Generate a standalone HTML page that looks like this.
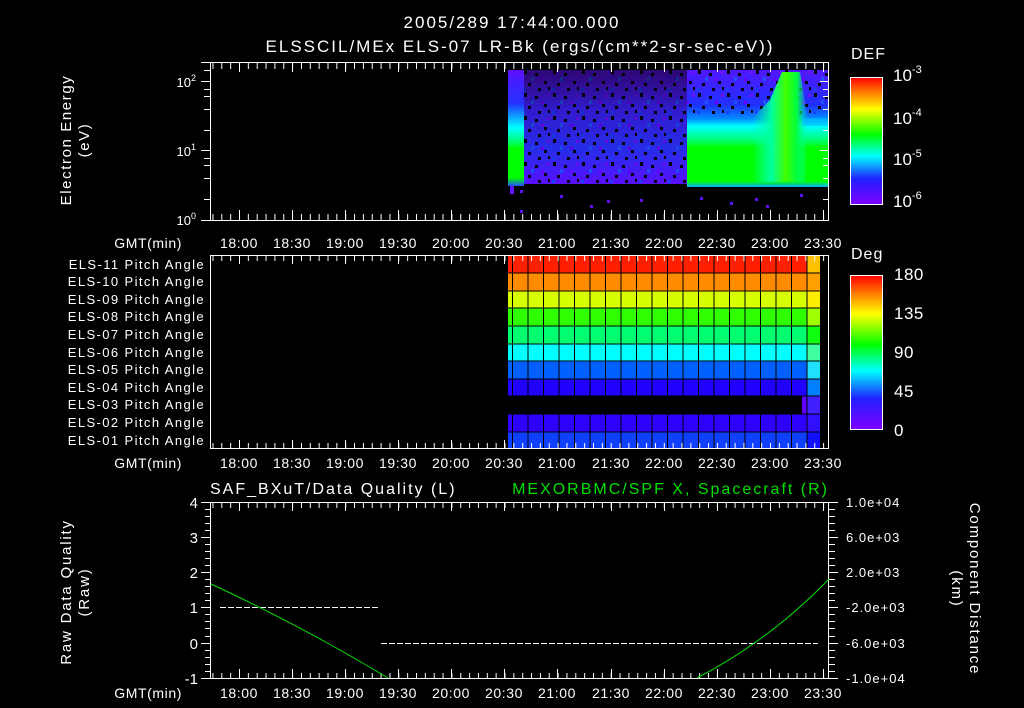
<!DOCTYPE html>
<html><head><meta charset="utf-8"><style>
html,body{margin:0;padding:0;background:#000;width:1024px;height:708px;overflow:hidden}
svg{display:block}
text{font-family:"Liberation Sans",sans-serif;fill:#fff}
</style></head><body>
<svg width="1024" height="708" viewBox="0 0 1024 708" xmlns="http://www.w3.org/2000/svg">
<defs>
<pattern id="tt" x="239" y="0" width="8.85" height="708" patternUnits="userSpaceOnUse"><rect x="0" y="0" width="1" height="708" fill="#fff"/></pattern>
<pattern id="speck" x="0" y="0" width="29" height="23" patternUnits="userSpaceOnUse">
<rect x="2" y="1" width="3" height="4" fill="#000"/><rect x="13" y="4" width="3" height="3" fill="#000"/><rect x="22" y="12" width="3" height="3" fill="#000"/><rect x="6" y="14" width="3" height="3" fill="#000"/><rect x="16" y="19" width="3" height="3" fill="#000"/><rect x="25" y="2" width="3" height="3" fill="#7010ff"/><rect x="9" y="8" width="3" height="4" fill="#2050ff"/><rect x="19" y="9" width="3" height="3" fill="#6a00ff"/><rect x="1" y="19" width="3" height="3" fill="#1840ff"/><rect x="26" y="18" width="2" height="3" fill="#000"/></pattern>
<linearGradient id="fadeTop" x1="0" y1="0" x2="0" y2="1"><stop offset="0" stop-color="#000" stop-opacity=".55"/><stop offset=".35" stop-color="#000" stop-opacity=".2"/><stop offset="1" stop-color="#000" stop-opacity="0"/></linearGradient>
<linearGradient id="cbDef" x1="0" y1="1" x2="0" y2="0"><stop offset="0" stop-color="#8000ff"/><stop offset=".2" stop-color="#2020ff"/><stop offset=".38" stop-color="#00ffff"/><stop offset=".55" stop-color="#00ff00"/><stop offset=".75" stop-color="#ffff00"/><stop offset=".88" stop-color="#ff8000"/><stop offset="1" stop-color="#ff0000"/></linearGradient>
<linearGradient id="gL" x1="0" y1="0" x2="0" y2="1"><stop offset="0" stop-color="#2030ff"/><stop offset=".3" stop-color="#00ffff"/><stop offset=".45" stop-color="#00ff80"/><stop offset=".55" stop-color="#00ff00"/><stop offset=".9" stop-color="#00ff00"/><stop offset="1" stop-color="#2050ff"/></linearGradient>
<linearGradient id="gP" x1="0" y1="0" x2="0" y2="1"><stop offset="0" stop-color="#6010ff"/><stop offset=".3" stop-color="#4020ff"/><stop offset=".7" stop-color="#2a30ff"/><stop offset="1" stop-color="#5a10ff"/></linearGradient>
<linearGradient id="gR" x1="0" y1="0" x2="0" y2="1"><stop offset="0" stop-color="#5018ff"/><stop offset=".3" stop-color="#2030ff"/><stop offset=".42" stop-color="#0090ff"/><stop offset=".48" stop-color="#00ffff"/><stop offset=".6" stop-color="#00ff70"/><stop offset=".66" stop-color="#00ff00"/><stop offset=".95" stop-color="#00ff00"/><stop offset="1" stop-color="#00b0ff"/></linearGradient>
<linearGradient id="gPk" x1="0" y1="0" x2="1" y2="0"><stop offset="0" stop-color="#00ffb0" stop-opacity="0"/><stop offset=".35" stop-color="#00ffa0"/><stop offset=".6" stop-color="#40ff00"/><stop offset=".8" stop-color="#00ff40"/><stop offset="1" stop-color="#00ffc0" stop-opacity="0"/></linearGradient>
</defs>

<!-- titles -->
<text x="512" y="28" font-size="17" text-anchor="middle" letter-spacing="2">2005/289 17:44:00.000</text>
<text x="520" y="52" font-size="17" text-anchor="middle" letter-spacing="2">ELSSCIL/MEx ELS-07 LR-Bk  (ergs/(cm**2-sr-sec-eV))</text>

<!-- ===== Panel 1 ===== -->
<rect x="508" y="70" width="16" height="45" fill="url(#gP)"/>
<rect x="508" y="103" width="16" height="83" fill="url(#gL)"/>
<rect x="524" y="70" width="163" height="114" fill="url(#gP)"/>
<rect x="524" y="70" width="163" height="114" fill="url(#speck)"/>
<rect x="524" y="70" width="163" height="114" fill="url(#fadeTop)"/>
<rect x="687" y="70" width="142" height="117" fill="url(#gR)"/>
<rect x="687" y="70" width="142" height="45" fill="url(#speck)"/>
<polygon points="752,118 770,100 782,72 800,72 808,120 806,182 752,182" fill="url(#gPk)"/>
<rect x="802" y="118" width="27" height="8" fill="#00c0ff" opacity=".6"/>
<rect x="510" y="186" width="4" height="8" fill="#6010ff"/><rect x="520" y="190" width="3" height="3" fill="#6010ff"/>
<rect x="560" y="195" width="3" height="3" fill="#6010ff"/><rect x="590" y="205" width="3" height="3" fill="#6010ff"/>
<rect x="640" y="199" width="3" height="3" fill="#6010ff"/><rect x="700" y="197" width="3" height="3" fill="#6010ff"/>
<rect x="730" y="202" width="3" height="3" fill="#6010ff"/><rect x="766" y="205" width="3" height="3" fill="#6010ff"/>
<rect x="800" y="194" width="3" height="3" fill="#6010ff"/><rect x="520" y="210" width="3" height="3" fill="#6010ff"/>
<rect x="607" y="200" width="3" height="3" fill="#6010ff"/><rect x="755" y="198" width="3" height="3" fill="#6010ff"/>
<!-- frame -->
<rect x="210.5" y="62.5" width="618" height="158" fill="none" stroke="#fff"/>
<line x1="201" y1="62.5" x2="210" y2="62.5" stroke="#fff"/>
<line x1="201" y1="220.5" x2="210" y2="220.5" stroke="#fff"/>
<rect x="211" y="63" width="617" height="6" fill="url(#tt)"/>
<rect x="211" y="214" width="617" height="6" fill="url(#tt)"/>
<g stroke="#fff">
<line x1="239.5" y1="63" x2="239.5" y2="72"/><line x1="292.5" y1="63" x2="292.5" y2="72"/><line x1="345.5" y1="63" x2="345.5" y2="72"/><line x1="398.5" y1="63" x2="398.5" y2="72"/><line x1="451.5" y1="63" x2="451.5" y2="72"/><line x1="504.5" y1="63" x2="504.5" y2="72"/><line x1="557.5" y1="63" x2="557.5" y2="72"/><line x1="611.5" y1="63" x2="611.5" y2="72"/><line x1="664.5" y1="63" x2="664.5" y2="72"/><line x1="717.5" y1="63" x2="717.5" y2="72"/><line x1="770.5" y1="63" x2="770.5" y2="72"/><line x1="823.5" y1="63" x2="823.5" y2="72"/>
<line x1="239.5" y1="210" x2="239.5" y2="220"/><line x1="292.5" y1="210" x2="292.5" y2="220"/><line x1="345.5" y1="210" x2="345.5" y2="220"/><line x1="398.5" y1="210" x2="398.5" y2="220"/><line x1="451.5" y1="210" x2="451.5" y2="220"/><line x1="504.5" y1="210" x2="504.5" y2="220"/><line x1="557.5" y1="210" x2="557.5" y2="220"/><line x1="611.5" y1="210" x2="611.5" y2="220"/><line x1="664.5" y1="210" x2="664.5" y2="220"/><line x1="717.5" y1="210" x2="717.5" y2="220"/><line x1="770.5" y1="210" x2="770.5" y2="220"/><line x1="823.5" y1="210" x2="823.5" y2="220"/>
<line x1="201" y1="81.5" x2="210" y2="81.5"/><line x1="201" y1="150.5" x2="210" y2="150.5"/>
<line x1="204" y1="199.5" x2="210" y2="199.5"/><line x1="204" y1="178.5" x2="210" y2="178.5"/><line x1="204" y1="165.5" x2="210" y2="165.5"/><line x1="204" y1="158.5" x2="210" y2="158.5"/>
<line x1="204" y1="130.5" x2="210" y2="130.5"/><line x1="204" y1="109.5" x2="210" y2="109.5"/><line x1="204" y1="96.5" x2="210" y2="96.5"/><line x1="204" y1="89.5" x2="210" y2="89.5"/>
<line x1="204" y1="70.5" x2="210" y2="70.5"/>
<line x1="820" y1="81.5" x2="829" y2="81.5"/><line x1="820" y1="150.5" x2="829" y2="150.5"/>
<line x1="823" y1="199.5" x2="829" y2="199.5"/><line x1="823" y1="178.5" x2="829" y2="178.5"/><line x1="823" y1="165.5" x2="829" y2="165.5"/><line x1="823" y1="158.5" x2="829" y2="158.5"/>
<line x1="823" y1="130.5" x2="829" y2="130.5"/><line x1="823" y1="109.5" x2="829" y2="109.5"/><line x1="823" y1="96.5" x2="829" y2="96.5"/><line x1="823" y1="89.5" x2="829" y2="89.5"/>
</g>
<text x="196" y="87" font-size="13" text-anchor="end">10<tspan font-size="9" dy="-6">2</tspan></text>
<text x="196" y="156" font-size="13" text-anchor="end">10<tspan font-size="9" dy="-6">1</tspan></text>
<text x="196" y="225" font-size="13" text-anchor="end">10<tspan font-size="9" dy="-6">0</tspan></text>
<text transform="translate(71,140) rotate(-90)" font-size="15" letter-spacing="1.6" text-anchor="middle">Electron Energy</text>
<text transform="translate(89,140) rotate(-90)" font-size="15" letter-spacing="1.6" text-anchor="middle">(eV)</text>

<g font-size="14" letter-spacing=".6" text-anchor="middle">
<text x="182" y="248" text-anchor="end">GMT(min)</text>
<text x="239" y="248">18:00</text><text x="292" y="248">18:30</text><text x="345" y="248">19:00</text><text x="398" y="248">19:30</text><text x="451" y="248">20:00</text><text x="504" y="248">20:30</text><text x="557" y="248">21:00</text><text x="611" y="248">21:30</text><text x="664" y="248">22:00</text><text x="717" y="248">22:30</text><text x="770" y="248">23:00</text><text x="823" y="248">23:30</text>
</g>

<!-- DEF colorbar -->
<text x="851" y="59" font-size="16" letter-spacing="1">DEF</text>
<rect x="850.5" y="77.5" width="32" height="127" fill="url(#cbDef)" stroke="#fff"/>
<g font-size="17"><text x="893" y="81">10<tspan font-size="11" dy="-8">-3</tspan></text>
<text x="893" y="124">10<tspan font-size="11" dy="-8">-4</tspan></text>
<text x="893" y="165">10<tspan font-size="11" dy="-8">-5</tspan></text>
<text x="893" y="207">10<tspan font-size="11" dy="-8">-6</tspan></text></g>

<!-- ===== Panel 2 ===== -->
<g>
<rect x="508" y="256" width="312" height="17" fill="#ff2000"/>
<rect x="508" y="273" width="312" height="18" fill="#ff8c00"/>
<rect x="508" y="291" width="312" height="17" fill="#d8ff00"/>
<rect x="508" y="308" width="312" height="18" fill="#30ff00"/>
<rect x="508" y="326" width="312" height="18" fill="#00ff70"/>
<rect x="508" y="344" width="312" height="17" fill="#00ffff"/>
<rect x="508" y="361" width="312" height="18" fill="#0060ff"/>
<rect x="508" y="379" width="312" height="17" fill="#2000ff"/>
<rect x="802" y="396" width="5" height="18" fill="#6000ff"/>
<rect x="807" y="396" width="13" height="18" fill="#4020ff"/>
<rect x="508" y="414" width="312" height="18" fill="#3000ff"/>
<rect x="508" y="432" width="312" height="17" fill="#1040ff"/>
<rect x="807" y="256" width="13" height="17" fill="#ffc000"/>
<rect x="807" y="273" width="13" height="18" fill="#ffa000"/>
<rect x="807" y="291" width="13" height="17" fill="#ffee00"/>
<rect x="807" y="308" width="13" height="18" fill="#a0ff00"/>
<rect x="807" y="326" width="13" height="18" fill="#10ff10"/>
<rect x="807" y="344" width="13" height="17" fill="#40ffa0"/>
<rect x="807" y="361" width="13" height="18" fill="#20e0ff"/>
<rect x="807" y="379" width="13" height="17" fill="#0080ff"/>
<rect x="807" y="414" width="13" height="18" fill="#3010ff"/>
<rect x="807" y="432" width="13" height="17" fill="#1010ff"/>
</g>
<g stroke="#000" stroke-width="1">
<line x1="508" y1="273" x2="820" y2="273"/><line x1="508" y1="291" x2="820" y2="291"/><line x1="508" y1="308" x2="820" y2="308"/><line x1="508" y1="326" x2="820" y2="326"/><line x1="508" y1="344" x2="820" y2="344"/><line x1="508" y1="361" x2="820" y2="361"/><line x1="508" y1="379" x2="820" y2="379"/><line x1="508" y1="396" x2="820" y2="396"/><line x1="508" y1="414" x2="820" y2="414"/><line x1="508" y1="432" x2="820" y2="432"/>
<line x1="512.5" y1="256" x2="512.5" y2="449"/><line x1="528" y1="256" x2="528" y2="449"/><line x1="543.5" y1="256" x2="543.5" y2="449"/><line x1="559" y1="256" x2="559" y2="449"/><line x1="574.5" y1="256" x2="574.5" y2="449"/><line x1="590" y1="256" x2="590" y2="449"/><line x1="605.5" y1="256" x2="605.5" y2="449"/><line x1="621" y1="256" x2="621" y2="449"/><line x1="636.5" y1="256" x2="636.5" y2="449"/><line x1="652" y1="256" x2="652" y2="449"/><line x1="667.5" y1="256" x2="667.5" y2="449"/><line x1="683" y1="256" x2="683" y2="449"/><line x1="698.5" y1="256" x2="698.5" y2="449"/><line x1="714" y1="256" x2="714" y2="449"/><line x1="729.5" y1="256" x2="729.5" y2="449"/><line x1="745" y1="256" x2="745" y2="449"/><line x1="760.5" y1="256" x2="760.5" y2="449"/><line x1="776" y1="256" x2="776" y2="449"/><line x1="791.5" y1="256" x2="791.5" y2="449"/><line x1="807" y1="256" x2="807" y2="449"/>
</g>
<rect x="210.5" y="255.5" width="618" height="193" fill="none" stroke="#fff"/>
<rect x="211" y="256" width="617" height="5" fill="url(#tt)"/>
<rect x="211" y="443" width="617" height="5" fill="url(#tt)"/>
<g stroke="#fff">
<line x1="239.5" y1="256" x2="239.5" y2="264"/><line x1="292.5" y1="256" x2="292.5" y2="264"/><line x1="345.5" y1="256" x2="345.5" y2="264"/><line x1="398.5" y1="256" x2="398.5" y2="264"/><line x1="451.5" y1="256" x2="451.5" y2="264"/><line x1="504.5" y1="256" x2="504.5" y2="264"/>
<line x1="239.5" y1="440" x2="239.5" y2="448"/><line x1="292.5" y1="440" x2="292.5" y2="448"/><line x1="345.5" y1="440" x2="345.5" y2="448"/><line x1="398.5" y1="440" x2="398.5" y2="448"/><line x1="451.5" y1="440" x2="451.5" y2="448"/><line x1="504.5" y1="440" x2="504.5" y2="448"/>
</g>
<g font-size="13" letter-spacing="1.4" text-anchor="end">
<text x="205" y="269">ELS-11 Pitch Angle</text><text x="205" y="286">ELS-10 Pitch Angle</text><text x="205" y="304">ELS-09 Pitch Angle</text><text x="205" y="321">ELS-08 Pitch Angle</text><text x="205" y="339">ELS-07 Pitch Angle</text><text x="205" y="357">ELS-06 Pitch Angle</text><text x="205" y="374">ELS-05 Pitch Angle</text><text x="205" y="392">ELS-04 Pitch Angle</text><text x="205" y="409">ELS-03 Pitch Angle</text><text x="205" y="427">ELS-02 Pitch Angle</text><text x="205" y="445">ELS-01 Pitch Angle</text>
</g>
<g font-size="14" letter-spacing=".6" text-anchor="middle">
<text x="182" y="468" text-anchor="end">GMT(min)</text>
<text x="239" y="468">18:00</text><text x="292" y="468">18:30</text><text x="345" y="468">19:00</text><text x="398" y="468">19:30</text><text x="451" y="468">20:00</text><text x="504" y="468">20:30</text><text x="557" y="468">21:00</text><text x="611" y="468">21:30</text><text x="664" y="468">22:00</text><text x="717" y="468">22:30</text><text x="770" y="468">23:00</text><text x="823" y="468">23:30</text>
</g>
<text x="851" y="259" font-size="16" letter-spacing="1">Deg</text>
<rect x="850.5" y="275.5" width="32" height="154" fill="url(#cbDef)" stroke="#fff"/>
<g font-size="17" letter-spacing=".5"><text x="894" y="280">180</text><text x="894" y="319">135</text><text x="894" y="358">90</text><text x="894" y="397">45</text><text x="894" y="436">0</text></g>

<!-- ===== Panel 3 ===== -->
<text x="210" y="494" font-size="16" letter-spacing="2">SAF_BXuT/Data Quality (L)</text>
<text x="829" y="494" font-size="16" letter-spacing="2" text-anchor="end" style="fill:#00e000">MEXORBMC/SPF X, Spacecraft (R)</text>
<rect x="210.5" y="502.5" width="618" height="176" fill="none" stroke="#fff"/>
<rect x="211" y="503" width="617" height="5" fill="url(#tt)"/>
<rect x="211" y="673" width="617" height="5" fill="url(#tt)"/>
<g stroke="#fff">
<line x1="201" y1="502.5" x2="210" y2="502.5"/><line x1="201" y1="537.5" x2="210" y2="537.5"/><line x1="201" y1="572.5" x2="210" y2="572.5"/><line x1="201" y1="607.5" x2="210" y2="607.5"/><line x1="201" y1="643.5" x2="210" y2="643.5"/><line x1="201" y1="678.5" x2="210" y2="678.5"/>
<line x1="205" y1="509.5" x2="210" y2="509.5"/><line x1="205" y1="516.5" x2="210" y2="516.5"/><line x1="205" y1="523.5" x2="210" y2="523.5"/><line x1="205" y1="530.5" x2="210" y2="530.5"/><line x1="205" y1="544.5" x2="210" y2="544.5"/><line x1="205" y1="551.5" x2="210" y2="551.5"/><line x1="205" y1="558.5" x2="210" y2="558.5"/><line x1="205" y1="565.5" x2="210" y2="565.5"/><line x1="205" y1="579.5" x2="210" y2="579.5"/><line x1="205" y1="586.5" x2="210" y2="586.5"/><line x1="205" y1="593.5" x2="210" y2="593.5"/><line x1="205" y1="600.5" x2="210" y2="600.5"/><line x1="205" y1="614.5" x2="210" y2="614.5"/><line x1="205" y1="621.5" x2="210" y2="621.5"/><line x1="205" y1="628.5" x2="210" y2="628.5"/><line x1="205" y1="636.5" x2="210" y2="636.5"/><line x1="205" y1="650.5" x2="210" y2="650.5"/><line x1="205" y1="657.5" x2="210" y2="657.5"/><line x1="205" y1="664.5" x2="210" y2="664.5"/><line x1="205" y1="671.5" x2="210" y2="671.5"/>
<line x1="829" y1="502.5" x2="838" y2="502.5"/><line x1="829" y1="537.5" x2="838" y2="537.5"/><line x1="829" y1="572.5" x2="838" y2="572.5"/><line x1="829" y1="607.5" x2="838" y2="607.5"/><line x1="829" y1="643.5" x2="838" y2="643.5"/><line x1="829" y1="678.5" x2="838" y2="678.5"/>
<line x1="829" y1="509.5" x2="835" y2="509.5"/><line x1="829" y1="516.5" x2="835" y2="516.5"/><line x1="829" y1="523.5" x2="835" y2="523.5"/><line x1="829" y1="530.5" x2="835" y2="530.5"/><line x1="829" y1="544.5" x2="835" y2="544.5"/><line x1="829" y1="551.5" x2="835" y2="551.5"/><line x1="829" y1="558.5" x2="835" y2="558.5"/><line x1="829" y1="565.5" x2="835" y2="565.5"/><line x1="829" y1="579.5" x2="835" y2="579.5"/><line x1="829" y1="586.5" x2="835" y2="586.5"/><line x1="829" y1="593.5" x2="835" y2="593.5"/><line x1="829" y1="600.5" x2="835" y2="600.5"/><line x1="829" y1="614.5" x2="835" y2="614.5"/><line x1="829" y1="621.5" x2="835" y2="621.5"/><line x1="829" y1="628.5" x2="835" y2="628.5"/><line x1="829" y1="636.5" x2="835" y2="636.5"/><line x1="829" y1="650.5" x2="835" y2="650.5"/><line x1="829" y1="657.5" x2="835" y2="657.5"/><line x1="829" y1="664.5" x2="835" y2="664.5"/><line x1="829" y1="671.5" x2="835" y2="671.5"/>
<line x1="239.5" y1="503" x2="239.5" y2="511"/><line x1="292.5" y1="503" x2="292.5" y2="511"/><line x1="345.5" y1="503" x2="345.5" y2="511"/><line x1="398.5" y1="503" x2="398.5" y2="511"/><line x1="451.5" y1="503" x2="451.5" y2="511"/><line x1="504.5" y1="503" x2="504.5" y2="511"/><line x1="557.5" y1="503" x2="557.5" y2="511"/><line x1="611.5" y1="503" x2="611.5" y2="511"/><line x1="664.5" y1="503" x2="664.5" y2="511"/><line x1="717.5" y1="503" x2="717.5" y2="511"/><line x1="770.5" y1="503" x2="770.5" y2="511"/><line x1="823.5" y1="503" x2="823.5" y2="511"/>
<line x1="239.5" y1="669" x2="239.5" y2="678"/><line x1="292.5" y1="669" x2="292.5" y2="678"/><line x1="345.5" y1="669" x2="345.5" y2="678"/><line x1="398.5" y1="669" x2="398.5" y2="678"/><line x1="451.5" y1="669" x2="451.5" y2="678"/><line x1="504.5" y1="669" x2="504.5" y2="678"/><line x1="557.5" y1="669" x2="557.5" y2="678"/><line x1="611.5" y1="669" x2="611.5" y2="678"/><line x1="664.5" y1="669" x2="664.5" y2="678"/><line x1="717.5" y1="669" x2="717.5" y2="678"/><line x1="770.5" y1="669" x2="770.5" y2="678"/><line x1="823.5" y1="669" x2="823.5" y2="678"/>
<line x1="220" y1="607.5" x2="380" y2="607.5" stroke-dasharray="6,2"/>
<line x1="381" y1="643.5" x2="818" y2="643.5" stroke-dasharray="6,2"/>
</g>
<path d="M211,584 Q300,625 388,678" fill="none" stroke="#00e000" stroke-width="1"/>
<path d="M697,678 Q770,640 829,579" fill="none" stroke="#00e000" stroke-width="1"/>
<g font-size="15" text-anchor="end">
<text x="198" y="508">4</text><text x="198" y="543">3</text><text x="198" y="578">2</text><text x="198" y="613">1</text><text x="198" y="649">0</text><text x="198" y="684">-1</text>
</g>
<g font-size="13" letter-spacing="1">
<text x="846" y="507">1.0e+04</text><text x="846" y="542">6.0e+03</text><text x="846" y="577">2.0e+03</text><text x="846" y="612">-2.0e+03</text><text x="846" y="648">-6.0e+03</text><text x="846" y="683">-1.0e+04</text>
</g>
<text transform="translate(71,592) rotate(-90)" font-size="15" letter-spacing="1.8" text-anchor="middle">Raw Data Quality</text>
<text transform="translate(89,592) rotate(-90)" font-size="15" letter-spacing="1.8" text-anchor="middle">(Raw)</text>
<text transform="translate(970,589) rotate(90)" font-size="15" letter-spacing="1.8" text-anchor="middle">Component Distance</text>
<text transform="translate(952,589) rotate(90)" font-size="15" letter-spacing="1.8" text-anchor="middle">(km)</text>
<g font-size="14" letter-spacing=".6" text-anchor="middle">
<text x="182" y="698" text-anchor="end">GMT(min)</text>
<text x="239" y="698">18:00</text><text x="292" y="698">18:30</text><text x="345" y="698">19:00</text><text x="398" y="698">19:30</text><text x="451" y="698">20:00</text><text x="504" y="698">20:30</text><text x="557" y="698">21:00</text><text x="611" y="698">21:30</text><text x="664" y="698">22:00</text><text x="717" y="698">22:30</text><text x="770" y="698">23:00</text><text x="823" y="698">23:30</text>
</g>
</svg>
</body></html>
